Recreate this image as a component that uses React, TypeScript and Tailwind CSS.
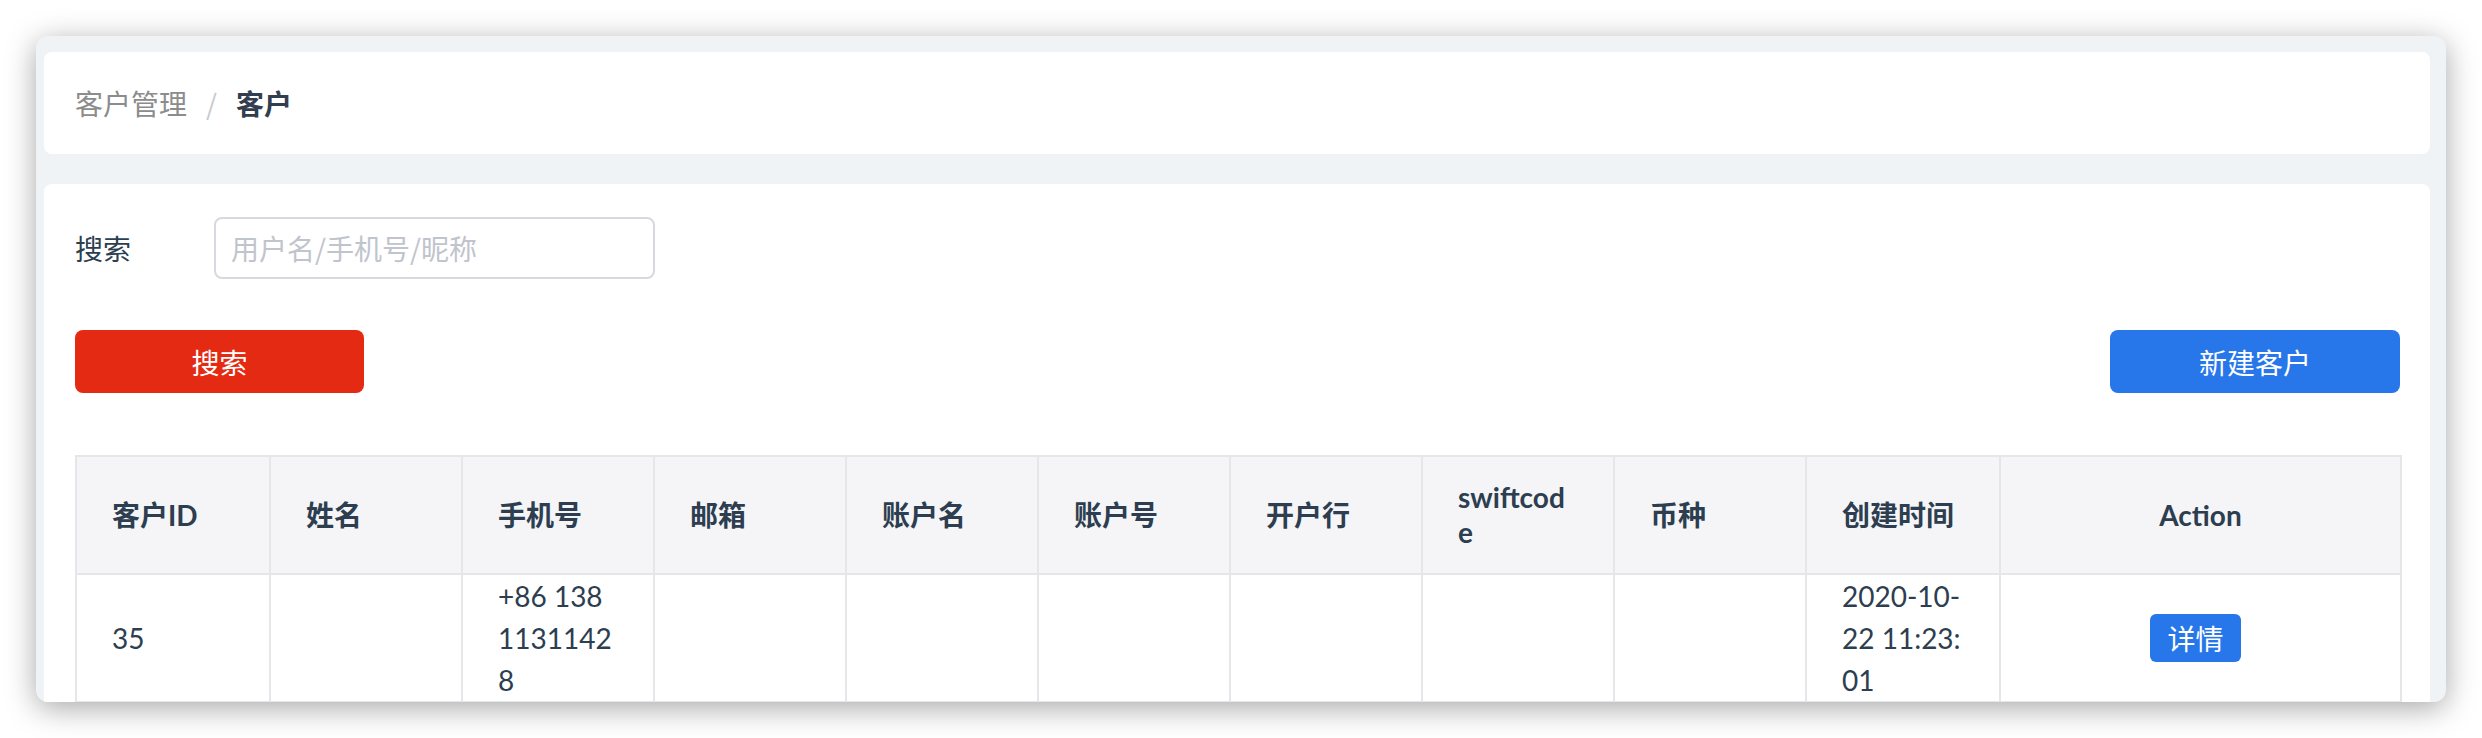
const cjk = '"Noto Sans CJK SC", sans-serif';
const latin = 'Lato, "Noto Sans CJK SC", sans-serif';

const columns = [
  { title: '客户ID', width: 'w-[194px]' },
  { title: '姓名', width: 'w-[192px]' },
  { title: '手机号', width: 'w-[192px]' },
  { title: '邮箱', width: 'w-[192px]' },
  { title: '账户名', width: 'w-[192px]' },
  { title: '账户号', width: 'w-[192px]' },
  { title: '开户行', width: 'w-[192px]' },
  { title: 'swiftcode', width: 'w-[192px]' },
  { title: '币种', width: 'w-[192px]' },
  { title: '创建时间', width: 'w-[194px]' },
  { title: 'Action', width: 'w-[401px]' },
];

function Breadcrumb() {
  return (
    <div className="flex h-[102px] items-center rounded-[8px] bg-white pl-[31px] text-[28px]" style={{ fontFamily: cjk }}>
      <span className="text-[#8c8c8c]">客户管理</span>
      <span className="mx-[19px] text-[#c8cacf]">/</span>
      <span className="font-bold text-[#333d50]">客户</span>
    </div>
  );
}

function SearchForm() {
  return (
    <>
      <div className="flex h-[62px] items-center">
        <label className="w-[139px] text-[28px] text-[#2c3e50]" style={{ fontFamily: cjk }}>搜索</label>
        <input
          className="h-[62px] w-[441px] rounded-[8px] border-2 border-[#d6d9de] px-[15px] text-[28px] outline-none placeholder:text-[#c0c4cc]"
          style={{ fontFamily: cjk }}
          placeholder="用户名/手机号/昵称"
        />
      </div>
      <div className="mt-[51px] flex justify-between" style={{ fontFamily: cjk }}>
        <button className="h-[63px] w-[289px] rounded-[8px] bg-[#e42a12] text-[28px] text-white">搜索</button>
        <button className="h-[63px] w-[290px] rounded-[8px] bg-[#2777ea] text-[28px] text-white">新建客户</button>
      </div>
    </>
  );
}

function CustomerTable() {
  const th = 'border-2 border-[#e4e6e9] py-[23px] align-middle text-[28px] font-bold leading-[35px] text-[#2c3e50]';
  const td = 'border-2 border-[#e4e6e9] py-0 align-middle text-[28px] leading-[42px] text-[#2c3e50]';
  const left = ' pl-[35px] pr-[10px] text-left';
  const center = ' px-0 text-center';

  return (
    <table className="mt-[62px] w-[2325px] table-fixed border-collapse border-2 border-[#d8dbdf]" style={{ fontFamily: latin }}>
      <colgroup>
        {columns.map((c) => (
          <col key={c.title} className={c.width} />
        ))}
      </colgroup>
      <thead>
        <tr className="bg-[#f5f5f7]">
          {columns.map((c) =>
            c.title === 'swiftcode' ? (
              <th key={c.title} className={th + left}>
                swiftcod
                <br />e
              </th>
            ) : c.title === 'Action' ? (
              <th key={c.title} className={th + center}>
                {c.title}
              </th>
            ) : (
              <th key={c.title} className={th + left}>
                {c.title}
              </th>
            )
          )}
        </tr>
      </thead>
      <tbody>
        <tr className="bg-white">
          <td className={td + left}>35</td>
          <td className={td + left}></td>
          <td className={td + left}>
            +86 138
            <br />
            1131142
            <br />8
          </td>
          <td className={td + left}></td>
          <td className={td + left}></td>
          <td className={td + left}></td>
          <td className={td + left}></td>
          <td className={td + left}></td>
          <td className={td + left}></td>
          <td className={td + left}>
            2020-10-
            <br />
            22 11:23:
            <br />
            01
          </td>
          <td className={td + center + ' pr-[10px]'}>
            <button
              className="h-[48px] rounded-[6px] bg-[#2777ea] px-[17px] text-[28px] leading-[48px] text-white"
              style={{ fontFamily: cjk }}
            >
              详情
            </button>
          </td>
        </tr>
      </tbody>
    </table>
  );
}

export default function App() {
  return (
    <div className="h-[738px] w-full overflow-hidden bg-white px-[36px] pt-[36px]">
      <div className="h-[666px] overflow-hidden rounded-[12px] bg-[#f0f3f6] pl-[8px] pr-[16px] pt-[16px] shadow-[0_6px_30px_rgba(0,0,0,0.35)]">
        <Breadcrumb />
        <div className="mt-[30px] rounded-[8px] bg-white pl-[31px] pr-[30px] pt-[33px] pb-[40px]">
          <SearchForm />
          <CustomerTable />
        </div>
      </div>
    </div>
  );
}
